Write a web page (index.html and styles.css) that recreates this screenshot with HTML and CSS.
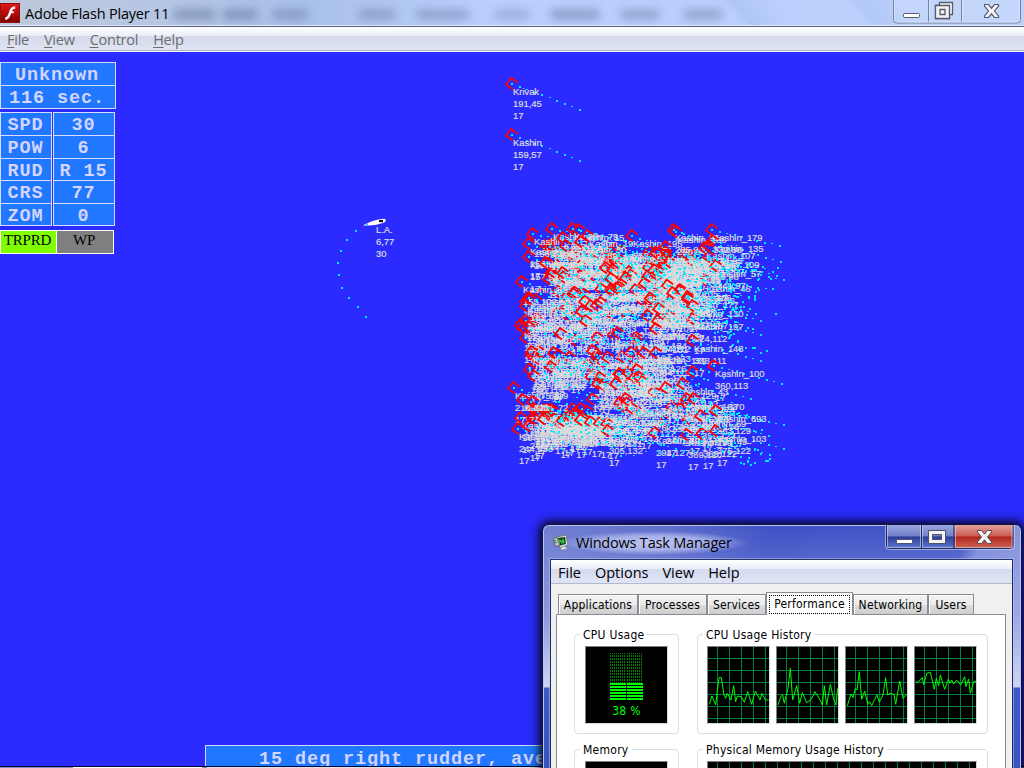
FILE: index.html
```html
<!DOCTYPE html>
<html lang="en">
<head>
<meta charset="utf-8">
<title>Adobe Flash Player 11</title>
<link rel="stylesheet" href="styles.css">
</head>
<body>
<div class="desktop">
  <header class="titlebar">
    <svg class="flash-icon" width="20" height="20" viewBox="0 0 20 20">
      <defs><linearGradient id="fl" x1="0" y1="0" x2="0" y2="1"><stop offset="0" stop-color="#e01818"/><stop offset=".5" stop-color="#b80c0c"/><stop offset="1" stop-color="#7c0000"/></linearGradient></defs>
      <rect x=".5" y=".5" width="19" height="19" fill="url(#fl)" stroke="#8c1010"/>
      <path d="M15.200 3.200v2.600c-1.800 0-2.600.7-3.200 2.400h1.700v2h-2.500C10 14 8.300 16.600 5.200 16.800v-2.500c2-.3 2.700-1.900 3.600-4.600C10 6 11.600 3.200 15.200 3.200z" fill="#fff"/>
    </svg>
    <span class="title">Adobe Flash Player 11</span>
    <span class="ghosts"><i class="g1"></i><i class="g2"></i><i class="g3"></i><i class="g4"></i><i class="g5"></i><i class="g6"></i><i class="g7"></i><i class="g8"></i></span>
    <svg class="caption" width="128" height="24" viewBox="0 0 128 24">
      <path d="M.5 0V19.500q0 3.500 3.500 3.500H124q3.500 0 3.500-3.500V0M35.500 0V22.500M68.500 0V22.500" fill="#ffffff22" stroke="#75829d"/>
      <path d="M1.500 0V19q0 3 3 3H123.500q3 0 3-3V0M36.500 0V22M69.500 0V22" fill="none" stroke="#dfe8ff" stroke-opacity=".7"/>
      <rect x="10.500" y="13.500" width="16" height="4" rx="1" fill="#fff" stroke="#555b6c"/>
      <path d="M46.500 2.500h13v12h-3v4h-14v-13h4z" fill="#f5f5f5" stroke="#555b6c" stroke-width="1.300"/>
      <path d="M42.500 5.500h14v13h-14zM47 9.500h5v5h-5z" fill="#f2f2f2" fill-rule="evenodd" stroke="#555b6c" stroke-width="1.300"/>
      <path d="M91.500 4.500h4l3 3.700 3-3.700h4v1.500l-4 5 4 5v1.500h-4l-3-3.700-3 3.700h-4V16l4-5-4-5z" fill="#f4f4f4" stroke="#555b6c" stroke-width="1.200"/>
    </svg>
  </header>
  <nav class="menubar">
    <span><u>F</u>ile</span><span><u>V</u>iew</span><span><u>C</u>ontrol</span><span><u>H</u>elp</span>
  </nav>
  <main class="stage">
    <svg class="map" id="map" width="1024" height="716" viewBox="0 52 1024 716">
      <path d="M363 225.500C369 222 374 219.800 384 218.700Q387 219.500 385 222C379 225 371 225.500 363 225.500z" fill="#fff"/>
      <rect x="379" y="220" width="4" height="2.200" fill="#111"/><rect x="366" y="223.500" width="2" height="1.500" fill="#0df"/>
    </svg>
    <section class="panel">
      <div class="box head"><div>Unknown</div><div>116 sec.</div></div>
      <div class="pair">
        <div class="box keys"><div>SPD</div><div>POW</div><div>RUD</div><div>CRS</div><div>ZOM</div></div>
        <div class="box vals"><div>30</div><div>6</div><div>R 15</div><div>77</div><div>0</div></div>
      </div>
      <div class="modes"><div class="on">TRPRD</div><div>WP</div></div>
    </section>
    <div class="status">15 deg right rudder, average</div>
    <div class="edge"><i></i><b></b><em></em></div>
  </main>

  <section class="window">
    <div class="wtitle">
      <svg width="19" height="18" viewBox="0 0 19 18">
        <path d="M5 3l9-2 2 10-8 3z" fill="#dde2e4" stroke="#6d777c"/><path d="M6 4l7-1 1 7-6 1.500z" fill="#103a14"/>
        <path d="M7 9l1-3 2 3 1-4 1 4" fill="none" stroke="#27d43a" stroke-width="1.200"/>
        <path d="M1 5l4-2 3 9-5 0z" fill="#b9c1c4" stroke="#616c70"/><path d="M2 7l2-.5M2.500 9l2-.5" stroke="#2a5b30"/>
        <path d="M9 13l4-1 2 3-6 1z" fill="#d8dcde" stroke="#90989b" stroke-width=".6"/>
      </svg>
      <span>Windows Task Manager</span>
    </div>
    <svg class="wcaption" width="130" height="25" viewBox="0 0 130 25">
      <defs>
        <linearGradient id="cb" x1="0" y1="0" x2="0" y2="1"><stop offset="0" stop-color="#9aa7e0"/><stop offset=".45" stop-color="#7381ca"/><stop offset=".5" stop-color="#2d3f98"/><stop offset="1" stop-color="#5f7bd8"/></linearGradient>
        <linearGradient id="cr" x1="0" y1="0" x2="0" y2="1"><stop offset="0" stop-color="#e0a29c"/><stop offset=".45" stop-color="#cc5c52"/><stop offset=".5" stop-color="#b02a1c"/><stop offset="1" stop-color="#cf6658"/></linearGradient>
      </defs>
      <path d="M1 0H69V24H5q-4 0-4-4z" fill="url(#cb)"/><path d="M69 0H128V20q0 4-4 4H69z" fill="url(#cr)"/>
      <path d="M1.500 0V20q0 3.500 3.500 3.500H124.500q3.500 0 3.500-3.500V0M36.500 0V23M69 0V23" fill="none" stroke="#20285c"/>
      <path d="M.5 0V21q0 3.500 4 3.500H125q4.500 0 4.500-4V0M2.500 0V22.500H35.500V0M37.500 0V22.500H68M70.500 0V22.500H127V0" fill="none" stroke="#d5daf5" stroke-opacity=".6"/>
      <rect x="11.500" y="14.500" width="16" height="4" rx="1" fill="#fff" stroke="#4a506a"/>
      <path d="M43.500 5.500h17v13h-17zM47.500 9.500h9v5h-9z" fill="#f4f4f4" fill-rule="evenodd" stroke="#4a506a"/>
      <path d="M92.500 5.500h4l3 3.700 3-3.700h4V7l-4 5 4 5v1.500h-4l-3-3.700-3 3.700h-4V17l4-5-4-5z" fill="#f6f6f6" stroke="#5a4550"/>
    </svg>
    <div class="client">
      <nav class="wmenu"><span>File</span><span>Options</span><span>View</span><span>Help</span></nav>
      <div class="tabs">
        <span class="t1">Applications</span><span class="t2">Processes</span><span class="t3">Services</span><span class="t4 active"><b>Performance</b></span><span class="t5">Networking</span><span class="t6">Users</span>
      </div>
      <div class="page">
        <fieldset class="small"><legend>CPU Usage</legend>
          <div class="screen meter"><div class="bars"><i></i><i></i></div><div class="bars lit"><i></i><i></i></div><p>38 %</p></div>
        </fieldset>
        <fieldset class="large"><legend>CPU Usage History</legend>
          <div class="charts">
            <div class="screen chart"><svg width="61" height="76"><polyline transform="scale(.3333) translate(-504 -396)" points="508,568 516,543 527,570 537,488 544,488 552,540 557,550 562,535 573,555 581,512 587,560 592,543 604,545 613,562 623,530 635,568 646,528 660,555 666,535 676,555 686,555"/></svg></div>
            <div class="screen chart"><svg width="61" height="76"><polyline transform="scale(.3333) translate(9 -396)" points="-6,570 2,545 8,540 13,565 24,520 31,460 38,555 50,512 59,565 67,533 80,563 94,553 105,530 122,558 127,570 133,512 140,570 151,508 161,553 168,570 173,520"/></svg></div>
            <div class="screen chart"><svg width="61" height="76"><polyline transform="scale(.3333) translate(-198 -396)" points="202,572 213,537 219,548 226,520 231,525 238,470 245,553 254,528 263,568 268,560 275,572 291,540 298,562 309,540 317,488 323,540 330,535 342,538 347,568 359,498 369,550 381,538"/></svg></div>
            <div class="screen chart"><svg width="61" height="76"><polyline transform="scale(.3333) translate(-405 -396)" points="409,498 413,503 427,488 431,510 440,475 451,472 463,523 469,490 476,513 481,480 494,523 505,492 509,505 515,495 521,507 530,495 542,510 554,485 558,515 566,492 571,535 581,500 588,500"/></svg></div>
          </div>
        </fieldset>
        <fieldset class="small"><legend>Memory</legend><div class="screen meter"></div></fieldset>
        <fieldset class="large"><legend>Physical Memory Usage History</legend><div class="screen chart wide"></div></fieldset>
      </div>
    </div>
  </section>
</div>
<script src="map.js"></script>
</body>
</html>
```
FILE: styles.css
```css
* { box-sizing: border-box; }
body { margin: 0; overflow: hidden; }
.desktop { position: relative; width: 1024px; height: 768px; overflow: hidden; background: #2b2bff; display: flex; flex-direction: column; }

.titlebar { position: relative; height: 27px; flex: none; display: flex; align-items: flex-start; padding: 3px 0 0 0; border-bottom: 1px solid #59617a; box-shadow: inset 0 -1px #e4ebfa;
  background: linear-gradient(50deg, transparent 71%, #a9c1f2aa 72%, transparent 76%, transparent 83%, #a9c1f288 84%, transparent 88%), linear-gradient(90deg, #bfc8da 0, #b5c6e4 160px, #a8bfe9 300px, #b9cefb 480px, #bcd0fc 1024px); }
.flash-icon { flex: none; }
.title { position: relative; z-index: 1; margin-left: 5px; font: 14.500px/21px "Open Sans", sans-serif; letter-spacing: -.2px; color: #000; white-space: nowrap; }
.ghosts i { position: absolute; top: 9px; height: 11px; background: #4e628c; opacity: .42; filter: blur(4px); border-radius: 5px; }
.ghosts .g1 { left: 173px; width: 42px; } .ghosts .g2 { left: 222px; width: 36px; } .ghosts .g3 { left: 272px; width: 36px; opacity: .35; }
.ghosts .g4 { left: 358px; width: 38px; opacity: .35; } .ghosts .g5 { left: 416px; width: 54px; opacity: .35; } .ghosts .g6 { left: 494px; width: 36px; opacity: .25; }
.ghosts .g7 { left: 550px; width: 50px; opacity: .4; } .ghosts .g8 { left: 620px; width: 40px; opacity: .35; box-shadow: 63px 0 #4e628c; }
.caption { margin: -3px 3px 0 auto; position: relative; }

.menubar { height: 25px; flex: none; display: flex; gap: 15px; padding-left: 7px; font: 14.500px/25px "Open Sans", sans-serif; letter-spacing: -.25px; color: #6d6d6d; border-bottom: 1px solid #f4f6fb; box-shadow: inset 0 -1px #b0b6c8;
  background: linear-gradient(#fff 0, #e9edf6 9px, #d5dbec 9px, #dfe5f3 100%); }
.menubar u { text-underline-offset: 2px; }

.stage { position: relative; flex: 1; overflow: hidden; }
.map { position: absolute; left: 0; top: 0; font: 9.400px "Liberation Sans", Arial, sans-serif; fill: #dcdcdc; }
.map text { stroke: #dcdcdc; stroke-width: .2; }
.map .hull { fill: none; stroke: #f00; stroke-width: 1.700; }
.map .trail { fill: #00e8ff; shape-rendering: crispEdges; }

.panel { position: relative; width: 116px; padding-top: 10px; font: bold 18.500px/22px "Liberation Mono", "Courier New", monospace; letter-spacing: .9px; color: #d4d4ff; text-align: center; }
.box { background: #1f78ff; border: 1px solid #d6dcff; white-space: nowrap; }
.box div { height: 22.600px; padding-top: 2px; border-top: 1px solid #d6dcff; }
.box div:first-child { border-top: 0; height: 22px; }
.head { height: 47px; } .head div { padding-right: 2px; }
.head div:last-child { padding-right: 2px; }
.pair { display: flex; gap: 1px; margin-top: 3px; height: 114px; }
.keys { width: 52px; } .vals { width: 62px; }
.keys div, .vals div { padding-right: 1px; }
.modes { display: flex; width: 114px; height: 24px; margin-top: 4px; border: 1px solid #fff; background: #808080; font: 15px/19px "Liberation Serif", "Times New Roman", serif; letter-spacing: -.2px; color: #000; }
.modes div { flex: 1; padding-right: 2px; }
.modes .on { background: #80ff00; border-right: 1px solid #fff; flex: 0 0 56px; }

.status { position: absolute; left: 205px; top: 693px; width: 420px; height: 24px; padding: 3px 0 0 53px; background: #1f78ff; border: 1px solid #d6dcff; font: bold 18.500px/21px "Liberation Mono", "Courier New", monospace; letter-spacing: .9px; color: #d4d4ff; white-space: pre; }
.edge { position: absolute; left: 0; right: 0; bottom: 0; height: 2px; display: flex; background: #7e8cc8; border-top: 1px solid #05052c; }
.edge i { width: 73px; } .edge b { width: 129px; background: #fff; } .edge em { margin-left: 5px; width: 340px; background: #dbe4f4; }

.window { position: absolute; left: 542px; top: 524px; width: 480px; height: 320px; padding: 2px 9px; border: 1px solid #10143c; border-radius: 7px 7px 0 0;
  box-shadow: inset 0 0 0 1px #b9c3f2, 0 0 7px 2px #000b, 0 0 14px 4px #0006;
  background: linear-gradient(#5f70d800 0, #aab4ea88 90px, #ced5f5 162px, #3f58c8 163px, #3452bc 100%), linear-gradient(115deg, #7080d0 0, #5d6dcc 120px, #3e50c4 210px, #4256c8 390px, #7c8cdc 405px, #8b98e0 460px); }
.wtitle { height: 32px; display: flex; align-items: center; padding-left: 0; }
.wtitle svg { flex: none; margin-right: 1px; }
.wtitle span { padding: 0 16px; margin-left: -12px; font: 14.500px/24px "Open Sans", sans-serif; letter-spacing: -.2px; white-space: nowrap; color: #000; background: radial-gradient(closest-side, #ccd2f6dd 0, #bac2f0bb 60%, #a5afe800 100%); }
.wcaption { position: absolute; left: 342px; top: 0; }
.client { width: 463px; margin-left: -2px; height: 260px; border: 1px solid #1e2a60; border-top-color: #28346c; background: #f0f0f0; outline: 1px solid #b9c3f288; font: 12px/15px "DejaVu Sans Condensed", "DejaVu Sans", sans-serif; font-stretch: condensed; color: #000; letter-spacing: .27px; }
.wmenu { height: 24px; display: flex; gap: 14px; padding-left: 7px; font: 14.500px/25px "Open Sans", sans-serif; letter-spacing: 0; border-bottom: 1px solid #b4bad0; background: linear-gradient(#fff 0, #e9edf8 9px, #d5dbf0 9px, #dfe4f5 100%); }
.tabs { display: flex; align-items: flex-end; height: 30px; padding-left: 7px; white-space: nowrap; }
.tabs span { height: 20px; margin-right: 0; line-height: 20px; text-align: center; border: 1px solid #898c95; border-bottom: 0; box-shadow: inset 1px 1px #fff; background: linear-gradient(#f2f2f2, #ebebeb 50%, #dcdcdc 50%, #cecece); letter-spacing: .2px; }
.t1 { width: 80px; } .t2 { width: 69px; } .t3 { width: 59px; } .tabs .t4 { width: 87px; height: 23px; margin-bottom: -1px; padding: 2px; background: #fff; box-shadow: none; position: relative; }
.t4 b { display: block; height: 19px; font-weight: normal; line-height: 16px; border: 1px dotted #000; }
.t5 { width: 75px; } .t6 { width: 46px; }
.page { display: grid; grid-template-columns: 105px 291px; column-gap: 18px; row-gap: 0; margin-left: 5px; width: 450px; height: 240px; padding: 12px 0 0 17px; align-content: start; background: #fff; border: 1px solid #898c95; }
fieldset { min-width: 0; height: 107px; margin: 0 0 8px; padding: 4px 0 0 10px; border: 1px solid #d5dfe5; border-radius: 4px; }
legend { padding: 0 3px; white-space: nowrap; height: 15px; line-height: 17px; }
.large { padding-left: 9px; }
.small legend { margin-left: -5px; } .large legend { margin-left: -4px; }
.screen { background-color: #000; border: 1px solid #808080; border-right-color: #d9d9d9; border-bottom-color: #d9d9d9; height: 78px; }
.meter { width: 83px; padding-top: 6px; color: #0f0; }
.bars { display: flex; justify-content: center; gap: 1px; height: 30px; }
.bars i { width: 16px; background: repeating-linear-gradient(#0000 0 1px, #000 1px 2px, #0000 2px 3px), repeating-linear-gradient(90deg, #008000 0 1px, #000 1px 2px); }
.bars.lit { height: 18px; } .bars.lit i { background: repeating-linear-gradient(#0f0 0 2px, #000 2px 3px); }
.meter p { margin: 3px 0 0; text-align: center; }
.charts { display: flex; gap: 6px; }
.chart { width: 63px; background-image: linear-gradient(90deg, #0000 9px, #008040 9px 10px, #0000 10px), linear-gradient(#0000 11px, #008040 11px); background-size: 12px 12px; }
.chart svg { display: block; }
.chart polyline { fill: none; stroke: #0f0; stroke-width: 3; }
.wide { width: 270px; }
```
FILE: map.js
```js
const NS = 'http://www.w3.org/2000/svg';
const map = document.getElementById('map');
let seed = 1973;
const rnd = () => (seed = (seed * 16807) % 2147483647) / 2147483647;

function add(parent, tag, attrs, text) {
  const el = document.createElementNS(NS, tag);
  for (const k in attrs) el.setAttribute(k, attrs[k]);
  if (text !== undefined) el.textContent = text;
  parent.appendChild(el);
}

// x, y: top corner of the contact marker
function contact(x, y, name, pos, slope = 0.385) {
  const g = document.createElementNS(NS, 'g');
  for (let i = 0; i < 10; i++) {
    const dx = Math.round(x + i * 7.55), dy = Math.round(y + 5 + i * 7.55 * slope);
    add(g, 'rect', { class: 'trail', x: dx, y: dy, width: 2, height: i % 3 === 2 ? 1 : 2 });
  }
  add(g, 'path', { class: 'hull', d: `M${x + 6.5} ${y + 4.5}L${x} ${y}L${x - 5} ${y + 6.5}L${x + 2} ${y + 11.5}` });
  [name, pos, '17'].forEach((t, i) => add(g, 'text', { x: x + 2, y: y + 17 + i * 12 }, t));
  map.appendChild(g);
}

contact(511, 78, 'Krivak', '191,45', 0.38);
contact(511, 129, 'Kashin', '159,57', 0.38);
['L.A.', '6,77', '30'].forEach((t, i) => add(map, 'text', { x: 376, y: 233 + i * 12 }, t));
[[355, 230], [346, 239], [340, 250], [337, 262], [338, 274], [341, 287], [348, 297], [357, 306], [365, 316]]
  .forEach(([x, y]) => add(map, 'rect', { class: 'trail', x, y, width: 2, height: 2 }));

// background of the formation: [x, y, width, height, count]
let id = 1;
[[545, 238, 75, 36, 32], [610, 245, 96, 30, 36], [525, 285, 60, 50, 18], [580, 276, 100, 36, 26],
 [527, 338, 70, 26, 13], [590, 325, 55, 55, 18], [522, 402, 55, 16, 22], [585, 385, 105, 33, 16]]
  .forEach(([x, y, w, h, n]) => {
    for (let i = 0; i < n; i++) {
      const px = x + rnd() * w, py = y + rnd() * h;
      contact(px, py, 'Kashin_' + id++, `${Math.round(px / 1.9 - 110)},${Math.round(py / 3.2)}`, 0.1 + rnd() * 0.36);
    }
  });

// loose wake ends on the eastern side
for (let i = 0; i < 95; i++) {
  const band = [[258, 44], [300, 56], [425, 40]][i % 3];
  add(map, 'rect', { class: 'trail', x: Math.round(728 + rnd() * rnd() * 58), y: Math.round(band[0] + rnd() * band[1]), width: 2, height: 2 });
}

[[532, 228, 60, '156,84'], [551, 223, 25, '168,82'], [528, 238, 44, '155,90'], [528, 251, 38, '157,94'],
 [578, 224, 15, '215,88'], [562, 232, 20, '189,89'], [572, 223, 79, '200,86'], [587, 230, 19, '220,89'], [580, 236, 50, '219,91'],
 [631, 230, 195, '252,92'], [673, 224, 91, '285,92'], [675, 226, 186, '290,94'], [711, 224, 179, '332,88'], [712, 235, 135, '334,93'],
 [704, 242, 107, '321,97'], [708, 251, 109, '325,98'], [715, 260, 57, '341,97'], [521, 276, 82, '155,102'], [528, 292, 58, '161,103'],
 [525, 300, 16, '159,107'], [525, 315, 34, '158,108'], [522, 322, 61, '158,111'], [585, 315, 183, '226,118'], [672, 287, 17, '292,105'],
 [687, 291, 177, '315,102'], [692, 300, 130, '327,107'], [692, 313, 197, '324,112'], [658, 303, 5, '279,109'], [655, 323, 68, '284,112'],
 [531, 346, 29, '181,113'], [550, 361, 70, '196,116'], [533, 370, 81, '175,119'], [513, 382, 88, '218,123'], [522, 394, 72, '174,127'],
 [520, 412, 94, '167,128'], [517, 423, 12, '244,133'], [528, 420, 67, '244,131'], [562, 415, 87, '269,130'], [580, 414, 3, '278,130'],
 [597, 378, 105, '247,121'], [619, 368, 127, '255,118'], [607, 425, 142, '305,132'], [638, 371, 143, '304,115'],
 [655, 347, 139, '304,115'], [692, 335, 148, '333,111'], [713, 360, 100, '360,113'], [682, 378, 43, '320,122'], [665, 382, 129, '340,122'],
 [686, 393, 163, '346,126'], [693, 393, 170, '348,125'], [715, 405, 693, '363,129'], [700, 410, 69, '355,127'], [715, 425, 103, '375,122'],
 [686, 429, 99, '369,120'], [654, 427, 121, '294,127'], [701, 428, 49, '365,122']]
  .forEach(([x, y, n, p]) => contact(x, y, 'Kashin_' + n, p, 0.2 + rnd() * 0.2));

// wake dots lying over the label clutter
[[550, 245, 110, 75, 190], [650, 250, 90, 75, 140], [540, 325, 110, 60, 110], [545, 395, 190, 60, 150]]
  .forEach(([x, y, w, h, n]) => {
    for (let i = 0; i < n; i++) add(map, 'rect', { class: 'trail', x: Math.round(x + rnd() * w), y: Math.round(y + rnd() * h), width: 2, height: 1 + i % 2 });
  });
// nearest hull outlines redrawn above the labels
[[545, 257], [562, 267], [548, 273], [565, 240], [590, 300], [600, 297], [560, 328], [617, 327], [655, 247], [665, 241], [708, 240],
 [687, 293], [657, 315], [553, 347], [592, 345], [643, 347], [532, 396], [532, 412], [543, 413], [580, 403], [625, 393], [615, 378],
 [605, 262], [612, 264], [625, 272], [692, 366], [520, 319], [528, 321]]
  .forEach(([x, y]) => add(map, 'path', { class: 'hull', d: `M${x + 6.5} ${y + 4.5}L${x} ${y}L${x - 5} ${y + 6.5}L${x + 2} ${y + 11.5}` }));
```
